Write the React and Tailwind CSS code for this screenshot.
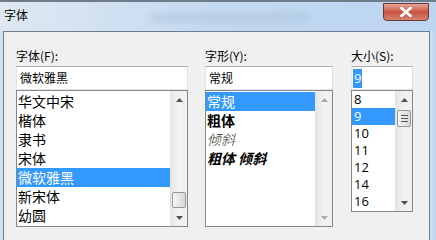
import React from 'react';

const fontNames = ['华文中宋', '楷体', '隶书', '宋体', '微软雅黑', '新宋体', '幼圆'];
const styles = [
    { label: '常规', cls: '' },
    { label: '粗体', cls: 'font-bold' },
    { label: '倾斜', cls: 'italic font-light text-[#333]' },
    { label: '粗体 倾斜', cls: 'font-bold italic' },
];
const sizes = ['8', '9', '10', '11', '12', '14', '16'];

const ui = { fontFamily: '"Noto Sans CJK SC", "Noto Sans", sans-serif' };

function ArrowUp({ dim }) {
    return (
        <svg width="7" height="4" viewBox="0 0 7 4">
            <path d="M0 4 L3.5 0 L7 4 Z" fill={dim ? '#a8a8a8' : '#505050'} />
        </svg>
    );
}

function ArrowDown({ dim }) {
    return (
        <svg width="7" height="4" viewBox="0 0 7 4">
            <path d="M0 0 L7 0 L3.5 4 Z" fill={dim ? '#a8a8a8' : '#505050'} />
        </svg>
    );
}

function Scrollbar({ thumbTop, thumbH, grip, dim }) {
    return (
        <div className="relative w-[17px] h-full flex flex-col bg-gradient-to-r from-[#e6e6e6] via-[#f2f2f2] to-[#f0f0f0] border-l border-[#e3e3e3]">
            <div className="h-[17px] flex items-center justify-center">
                <ArrowUp dim={dim} />
            </div>
            <div className="flex-1" />
            <div className="h-[17px] flex items-center justify-center">
                <ArrowDown dim={dim} />
            </div>
            {thumbH ? (
                <div
                    className="absolute left-[1px] w-[14px] rounded-[2px] border border-[#979797] bg-gradient-to-r from-[#f5f5f5] to-[#d9d9d9] flex flex-col items-center justify-center gap-[2px]"
                    style={{ top: thumbTop, height: thumbH }}
                >
                    {grip && (
                        <>
                            <div className="w-[7px] h-[1px] bg-[#555]" />
                            <div className="w-[7px] h-[1px] bg-[#555]" />
                            <div className="w-[7px] h-[1px] bg-[#555]" />
                        </>
                    )}
                </div>
            ) : null}
        </div>
    );
}

function TextBox({ children }) {
    return (
        <div className="h-[24px] bg-white border border-[#abadb3] border-r-[#dbdfe6] border-b-[#e3e9ef] border-l-[#e2e3ea] flex items-center">
            {children}
        </div>
    );
}

export default function App() {
    return (
        <div className="w-[436px] h-[240px] overflow-hidden flex flex-col bg-[#c9dcf0]" style={ui}>
            {/* Title bar */}
            <div className="relative h-[31px] shrink-0 bg-gradient-to-r from-[#dfe8f2] via-[#c3d9f1] to-[#bcd5f0] border-t-2 border-[#6f7c89]">
                <div className="absolute left-[150px] top-[12px] w-[160px] h-[8px] rounded-full bg-[#9fb6cf] opacity-40 blur-[3px]" />
                <div className="absolute left-[4px] top-[5px] text-[12px] leading-[16px] text-black">字体</div>
                <div className="absolute left-[383px] top-[1px] w-[46px] h-[18px] rounded-b-[4px] border border-[#6b3a35] bg-gradient-to-b from-[#e8a69b] via-[#c95443] to-[#d7826f] flex items-center justify-center">
                    <svg width="12" height="10" viewBox="0 0 12 10">
                        <path d="M1.5 1 L10.5 9 M10.5 1 L1.5 9" stroke="#ffffff" strokeWidth="2.6" strokeLinecap="square" />
                        <path d="M1.5 1 L10.5 9 M10.5 1 L1.5 9" stroke="#ffffff" strokeWidth="2" />
                    </svg>
                </div>
            </div>

            <div className="flex flex-1">
                <div className="w-[3px] bg-[#d2e1f1]" />
                {/* Client area */}
                <div className="flex-1 bg-[#f0f0f0] border-t border-l border-[#6d7d8e] pt-[16px] pl-[12px]">
                    <div className="flex text-[12px] text-black">
                        {/* Font column */}
                        <div className="w-[172px] flex flex-col">
                            <div className="h-[16px] leading-[16px] mb-[2px]">字体(F):</div>
                            <TextBox>
                                <span className="pl-[3px] text-[12px]">微软雅黑</span>
                            </TextBox>
                            <div className="h-[137px] bg-white border border-[#828790] flex">
                                <div className="flex-1 pt-[1px]">
                                    {fontNames.map(n => (
                                        <div
                                            key={n}
                                            className={`h-[19px] leading-[19px] text-[14px] pl-[1px] ${n === '微软雅黑' ? 'bg-[#3399ff] text-white' : 'text-black'}`}
                                        >
                                            {n}
                                        </div>
                                    ))}
                                </div>
                                <Scrollbar thumbTop={101} thumbH={16} />
                            </div>
                        </div>

                        {/* Style column */}
                        <div className="w-[128px] ml-[17px] flex flex-col">
                            <div className="h-[16px] leading-[16px] mb-[2px]">字形(Y):</div>
                            <TextBox>
                                <span className="pl-[3px] text-[12px]">常规</span>
                            </TextBox>
                            <div className="h-[137px] bg-white border border-[#828790] flex">
                                <div className="flex-1 pt-[1px]">
                                    {styles.map((s, i) => (
                                        <div
                                            key={s.label}
                                            className={`h-[19px] leading-[19px] text-[14px] pl-[1px] ${i === 0 ? 'bg-[#3399ff] text-white' : s.cls}`}
                                        >
                                            {s.label}
                                        </div>
                                    ))}
                                </div>
                                <Scrollbar dim />
                            </div>
                        </div>

                        {/* Size column */}
                        <div className="w-[62px] ml-[18px] flex flex-col">
                            <div className="h-[16px] leading-[16px] mb-[2px]">大小(S):</div>
                            <TextBox>
                                <span className="ml-[1px] px-[1px] h-[19px] leading-[19px] bg-[#3399ff] text-white text-[13px]" style={{ fontFamily: '"Open Sans", sans-serif' }}>9</span>
                            </TextBox>
                            <div className="h-[122px] bg-white border border-[#828790] flex">
                                <div className="flex-1" style={{ fontFamily: '"Open Sans", sans-serif' }}>
                                    {sizes.map(s => (
                                        <div
                                            key={s}
                                            className={`h-[17px] leading-[17px] text-[13px] pl-[2px] ${s === '9' ? 'bg-[#3399ff] text-white' : 'text-black'}`}
                                        >
                                            {s}
                                        </div>
                                    ))}
                                </div>
                                <Scrollbar thumbTop={19} thumbH={17} grip />
                            </div>
                        </div>
                    </div>
                </div>
                <div className="w-[7px] border-l border-[#6d7d8e] bg-gradient-to-r from-[#d3e2f2] to-[#bcd3ec]" />
            </div>
        </div>
    );
}
